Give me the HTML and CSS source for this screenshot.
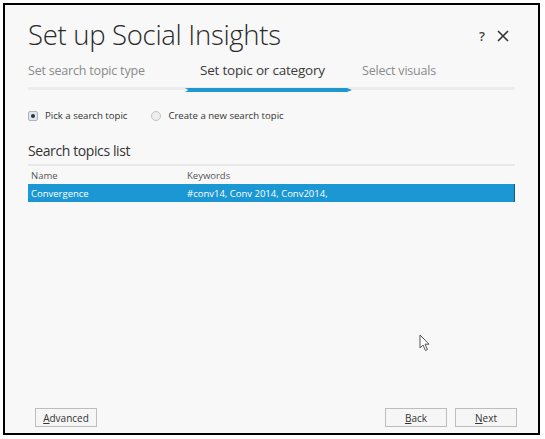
FILE: index.html
```html
<!DOCTYPE html>
<html lang="en">
<head>
<meta charset="UTF-8" />
<title>Set up Social Insights</title>
<link rel="stylesheet" href="styles.css">
</head>
<body>

<div class="frame">
  <div class="dialog">
    <div class="title-row">
      <h1>Set up Social Insights</h1>
      <div class="title-actions">
        <span class="help">?</span>
        <svg class="close" width="12" height="12" viewBox="0 0 12 12">
          <path d="M1 1 L11 11 M11 1 L1 11" stroke="#333" stroke-width="1.6" fill="none" />
        </svg>
      </div>
    </div>

    <div class="steps">
      <div class="step">Set search topic type</div>
      <div class="step active">Set topic or category</div>
      <div class="step">Select visuals</div>
    </div>

    <div class="options">
      <label class="radio checked"><span class="dot"></span>Pick a search topic</label>
      <label class="radio"><span class="dot"></span>Create a new search topic</label>
    </div>

    <h2>Search topics list</h2>
    <div class="grid">
      <div class="grid-head">
        <span class="col-name">Name</span>
        <span class="col-keys">Keywords</span>
      </div>
      <div class="grid-row selected">
        <span class="col-name">Convergence</span>
        <span class="col-keys">#conv14, Conv 2014, Conv2014,</span>
      </div>
    </div>

    <div class="spacer">
      <svg class="cursor" width="12" height="18" viewBox="0 0 12 18">
        <path d="M1 1 L1 14 L4 11 L6.5 16.5 L8.5 15.6 L6 10.2 L10 10.2 Z" fill="#fff" stroke="#555" stroke-width="1" />
      </svg>
    </div>

    <div class="footer">
      <button class="btn"><u>A</u>dvanced</button>
      <div class="nav">
        <button class="btn"><u>B</u>ack</button>
        <button class="btn"><u>N</u>ext</button>
      </div>
    </div>
  </div>
</div>

</body>
</html>
```

FILE: styles.css
```css
body {
  margin: 0;
  background: #fff;
  font-family: 'Open Sans', 'Liberation Sans', sans-serif;
  color: #333;
}
.frame {
  margin: 3px 5px 4px 3px;
  height: 428px;
  border: 2px solid #000;
}
.dialog {
  height: 100%;
  box-sizing: border-box;
  background: #f8f8f8;
  padding: 12px 23px 6px 23px;
  display: flex;
  flex-direction: column;
  position: relative;
}
.title-row {
  display: flex;
  justify-content: space-between;
  align-items: center;
}
h1 {
  margin: 0;
  font-weight: 300;
  font-size: 27.5px;
  letter-spacing: -0.3px;
  color: #2a2a2a;
  line-height: 36px;
}
.title-actions {
  display: flex;
  align-items: center;
  gap: 12px;
  margin-right: 6px;
  padding-top: 2px;
}
.help {
  font-size: 13px;
  font-weight: 600;
  color: #444;
}
.steps {
  display: flex;
  margin-top: 8px;
  height: 26px;
  border-bottom: 3px solid #ececec;
}
.step {
  font-size: 12.5px;
  color: #8a8a8a;
  padding-top: 1px;
  letter-spacing: -0.2px;
}
.step:first-child {
  width: 172px;
}
.step.active {
  color: #3a3a3a;
  width: 162px;
  position: relative;
  font-size: 13.5px;
  padding-top: 0;
}
.step.active::after {
  content: '';
  position: absolute;
  left: -15px;
  right: 10px;
  bottom: -5px;
  height: 4px;
  background: #1f97cf;
  clip-path: polygon(0 0, 97% 0, 100% 50%, 97% 100%, 0 100%, 2% 50%);
}
.options {
  display: flex;
  gap: 24px;
  margin-top: 19px;
  font-size: 9.6px;
  color: #333;
}
.radio {
  display: flex;
  align-items: center;
  gap: 7px;
}
.dot {
  width: 8px;
  height: 8px;
  border-radius: 50%;
  border: 1px solid #c4c4c4;
  background: #eee;
  display: inline-block;
  position: relative;
}
.radio.checked .dot {
  border-radius: 2px;
  background: #e0e6ee;
  border-color: #a8b4c4;
}
.radio.checked .dot::after {
  content: '';
  position: absolute;
  left: 2px;
  top: 2px;
  width: 4px;
  height: 4px;
  border-radius: 50%;
  background: #333;
}
h2 {
  margin: 19px 0 0 0;
  font-size: 14px;
  letter-spacing: -0.4px;
  font-weight: 400;
  color: #333;
  line-height: 20px;
}
.grid {
  margin-top: 3px;
  border-top: 2px solid #e8e8e8;
}
.grid-head, .grid-row {
  display: flex;
  font-size: 9.5px;
  height: 18px;
  align-items: center;
}
.grid-head {
  color: #555;
  height: 18px;
}
.grid-row.selected {
  background: #1b98d3;
  color: #fff;
  border-right: 1px solid #0d5d86;
}
.col-name {
  width: 156px;
  padding-left: 3px;
}
.spacer {
  flex: 1;
  position: relative;
}
.cursor {
  position: absolute;
  left: 391px;
  top: 132px;
}
.footer {
  display: flex;
  justify-content: space-between;
  align-items: center;
  padding: 0 0 0 7px;
}
.nav {
  display: flex;
  gap: 8px;
  margin-right: -2px;
}
.btn {
  font-family: 'Open Sans', 'Liberation Sans', sans-serif;
  font-size: 10px;
  color: #333;
  background: #f6f6f6;
  border: 1px solid #bdbdbd;
  width: 62px;
  height: 19px;
  padding: 0;
}
.btn u {
  text-decoration: underline;
}
```
